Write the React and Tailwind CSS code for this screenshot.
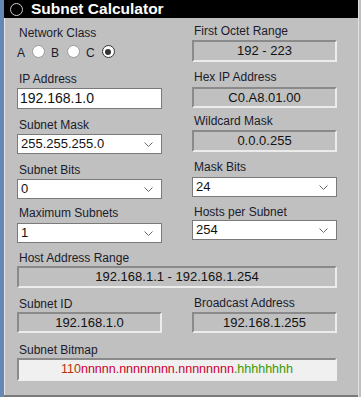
import React from "react";

const font = { fontFamily: '"Liberation Sans", Arial, sans-serif' };

function Label({ children, className = "" }) {
  return (
    <div className={"h-[14px] pl-[2px] text-[12px] leading-[14px] text-[#1b1b2c] whitespace-nowrap " + className}>
      {children}
    </div>
  );
}

function Sunken({ children, className = "", h = "h-[22px]" }) {
  return (
    <div
      className={
        "flex items-center justify-center border-2 border-t-[#8a8a8a] border-l-[#8a8a8a] border-b-[#ececec] border-r-[#ececec] bg-[#c0c0c0] text-[13px] text-[#111] " +
        h +
        " " +
        className
      }
    >
      {children}
    </div>
  );
}

function Select({ value, className = "" }) {
  return (
    <div
      className={
        "flex h-[20px] items-center justify-between border border-[#7a7a7a] bg-white pl-[3px] pr-[8px] text-[13px] text-[#111] " +
        className
      }
    >
      <span>{value}</span>
      <svg width="9" height="5" viewBox="0 0 9 5">
        <path d="M0.5 0.5 L4.5 4.5 L8.5 0.5" fill="none" stroke="#6a6a6a" strokeWidth="1" />
      </svg>
    </div>
  );
}

function Radio({ checked }) {
  return (
    <div
      className={
        "flex h-[13px] w-[13px] items-center justify-center rounded-full border bg-white " +
        (checked ? "border-[#333]" : "border-[#9a9a9a]")
      }
    >
      {checked && <div className="h-[6px] w-[6px] rounded-full bg-[#333]" />}
    </div>
  );
}

export default function App() {
  return (
    <div className="flex h-[397px] w-[361px] bg-[#c0c0c0]" style={font}>
      <div className="w-[4px] bg-[#6588b2]" />
      <div className="flex w-[354px] flex-col border-b-2 border-b-[#7a7a7a]">
        <div className="flex h-[18px] items-center bg-black pl-[6px]">
          <div className="h-[13px] w-[13px] rounded-full border border-[#cfcfcf] bg-black" />
          <span className="ml-[8px] text-[15.5px] font-bold leading-[18px] text-white">Subnet Calculator</span>
        </div>
        <div className="flex flex-1 flex-col border-l border-l-[#e6e6e6] pl-[12px]">
          <div className="flex gap-[30px]">
            {/* left column */}
            <div className="flex w-[145px] flex-col">
              <Label className="mt-[8px]">Network Class</Label>
              <div className="mt-[5px] flex h-[13px] items-center text-[12px] leading-[14px] text-[#1b1b2c]">
                <span className="mt-[2px]">A</span>
                <div className="ml-[7px]"><Radio /></div>
                <span className="ml-[6px] mt-[2px]">B</span>
                <div className="ml-[8px]"><Radio /></div>
                <span className="ml-[6px] mt-[2px]">C</span>
                <div className="ml-[7px]"><Radio checked /></div>
              </div>
              <Label className="mt-[14px]">IP Address</Label>
              <div className="mt-[2px] flex h-[21px] items-center border border-[#7a7a7a] bg-white pl-[2px] text-[14px] text-[#111]">
                192.168.1.0
              </div>
              <Label className="mt-[9px]">Subnet Mask</Label>
              <Select className="mt-[2px]" value="255.255.255.0" />
              <Label className="mt-[9px]">Subnet Bits</Label>
              <Select className="mt-[2px]" value="0" />
              <Label className="mt-[7px]">Maximum Subnets</Label>
              <Select className="mt-[3px]" value="1" />
            </div>
            {/* right column */}
            <div className="flex w-[145px] flex-col">
              <Label className="mt-[6px]">First Octet Range</Label>
              <Sunken className="mt-[2px]">192 - 223</Sunken>
              <Label className="mt-[8px]">Hex IP Address</Label>
              <Sunken className="mt-[3px]" h="h-[21px]">C0.A8.01.00</Sunken>
              <Label className="mt-[6px]">Wildcard Mask</Label>
              <Sunken className="mt-[2px]">0.0.0.255</Sunken>
              <Label className="mt-[8px]">Mask Bits</Label>
              <Select className="mt-[3px]" value="24" />
              <Label className="mt-[8px]">Hosts per Subnet</Label>
              <Select className="mt-[1px]" value="254" />
            </div>
          </div>

          <div className="flex w-[320px] flex-col">
            <Label className="mt-[8px]">Host Address Range</Label>
            <Sunken className="mt-[1px]">192.168.1.1 - 192.168.1.254</Sunken>
          </div>

          <div className="flex gap-[30px]">
            <div className="flex w-[145px] flex-col">
              <Label className="mt-[9px]">Subnet ID</Label>
              <Sunken className="mt-[1px]" h="h-[21px]">192.168.1.0</Sunken>
            </div>
            <div className="flex w-[145px] flex-col">
              <Label className="mt-[8px]">Broadcast Address</Label>
              <Sunken className="mt-[2px]" h="h-[21px]">192.168.1.255</Sunken>
            </div>
          </div>

          <div className="flex w-[320px] flex-col">
            <Label className="mt-[10px]">Subnet Bitmap</Label>
            <div className="mt-[1px] flex h-[23px] items-center justify-center border-2 border-t-[#8a8a8a] border-l-[#8a8a8a] border-b-[#f0f0f0] border-r-[#f0f0f0] bg-[#f0f0f0] text-[12.5px]">
              <span className="text-[#b8300c]">110</span>
              <span className="text-[#cc0033]">nnnnn.nnnnnnnn.nnnnnnnn</span>
              <span className="text-[#4a7a3a]">.</span>
              <span className="text-[#389a00]">hhhhhhhh</span>
            </div>
          </div>
        </div>
      </div>
      <div className="w-[1px] bg-[#e2e2e2]" />
      <div className="w-[2px] bg-[#c0c0c0]" />
    </div>
  );
}
